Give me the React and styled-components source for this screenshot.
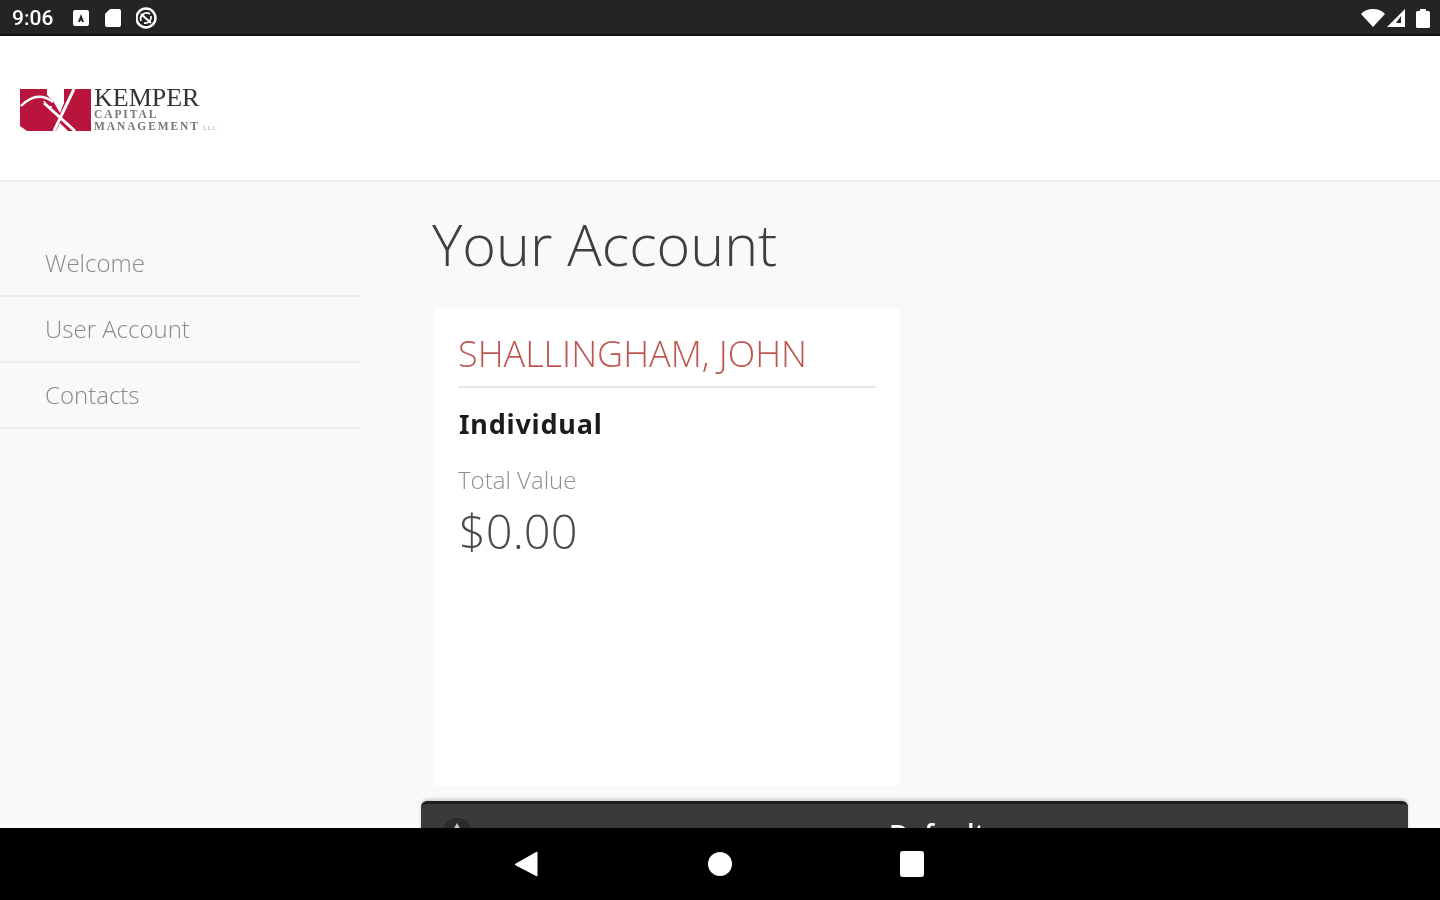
import React from 'react';
import styled, { createGlobalStyle } from 'styled-components';

const Global = createGlobalStyle`
  html, body { margin: 0; padding: 0; background: #000; }
  * { box-sizing: border-box; }
`;
const Page = styled.div`
  width: 1440px; height: 900px; display: flex; flex-direction: column; overflow: hidden;
  font-family: "Open Sans", "Noto Sans", sans-serif; background: #f9f9f9; filter: blur(0.6px);
`;
const StatusBar = styled.div`
  height: 36px; flex: none; background: #242424; border-bottom: 2px solid #111; color: #fff;
  display: flex; align-items: center; justify-content: space-between; padding: 1px 10px 0 12px;
`;
const StatusGroup = styled.div`
  display: flex; align-items: center; gap: ${p => p.$gap || 0}px;
`;
const BatteryGap = styled.span`
  width: 10px;
`;
const Clock = styled.span`
  font-family: Roboto, sans-serif; font-size: 21px; font-weight: 500; width: 42px; margin-right: 18px;
`;
const Header = styled.header`
  height: 146px; flex: none; background: #fff; border-bottom: 2px solid #eeeeee;
  display: flex; align-items: center; padding: 0 0 0 20px;
`;
const Logo = styled.div`
  display: flex; align-items: flex-start; margin-top: 4px;
`;
const LogoText = styled.div`
  font-family: "Liberation Serif", serif; margin: -1px 0 0 3px;
`;
const LogoMain = styled.div`
  font-size: 26px; line-height: 20px; color: #333; height: 20px;
`;
const LogoSmall = styled.div`
  font-size: 11.5px; line-height: 12px; height: 12px; color: #777; white-space: nowrap; letter-spacing: 1.9px;
  font-weight: 700;
`;
const Tiny = styled.span`
  font-size: 7px; margin-left: 3px; color: #aaa; letter-spacing: 0.5px; font-weight: 400;
`;
const Content = styled.div`
  flex: 1; min-height: 0; display: flex; overflow: hidden;
`;
const Sidebar = styled.nav`
  width: 360px; flex: none; padding-top: 49px;
`;
const NavItem = styled.div`
  height: 66px; padding: 0 0 1px 45px; display: flex; align-items: center;
  font-size: 24px; font-weight: 300; color: #8a8a8a; border-bottom: 2px solid #eeeeee;
`;
const Main = styled.main`
  flex: 1; min-width: 0; padding: 26px 32px 0 61px; display: flex; flex-direction: column;
`;
const Title = styled.h1`
  flex: none; margin: 0 0 0 11px; font-size: 57.5px; line-height: 73px; font-weight: 300; color: #3f3f3f; height: 100px;
`;
const Card = styled.section`
  width: 466px; height: 478px; flex: none; margin-left: 13px; background: #fff; border-radius: 5px;
  padding: 20px 24px;
`;
const Name = styled.h2`
  margin: 0; font-size: 36px; line-height: 52px; font-weight: 300; color: #bd5650;
  height: 60px; border-bottom: 2px solid #e8e8e8; white-space: nowrap;
`;
const AccountType = styled.div`
  margin: 18px 0 0 1px; font-family: "Noto Sans", sans-serif; font-size: 27px; line-height: 36px; font-weight: 700;
  letter-spacing: 0.8px; color: #1c1c1c;
`;
const Label = styled.div`
  margin-top: 22px; font-size: 24px; line-height: 32px; font-weight: 300; color: #8f8f8f;
`;
const Value = styled.div`
  margin: 4px 0 0 1px; font-size: 47px; line-height: 62px; font-weight: 300; color: #4a4a4a;
`;
const ActionBar = styled.div`
  width: 987px; height: 60px; flex: none; margin: 15px 0 0 0; background: #3a3a3a;
  border-top: 3px solid #1e1e1e; border-radius: 6px 6px 0 0; position: relative;
  box-shadow: 0 -2px 3px rgba(0,0,0,.18);
  padding-left: 468px; color: #fff; font-size: 27px; font-weight: 600; line-height: 60px;
`;
const ActionIcon = styled.span`
  position: absolute; left: 21px; top: 14px; width: 30px; height: 30px; border-radius: 50%; background: #2b2b2b;
`;
const ActionCaret = styled.span`
  position: absolute; left: 11px; top: 5px; border-left: 4px solid transparent; border-right: 4px solid transparent; border-bottom: 7px solid #ccc;
`;
const NavBar = styled.div`
  height: 72px; flex: none; background: #000; display: flex; align-items: center; justify-content: center; gap: 144px;
`;
const Svg = styled.svg`
  display: block; flex: none;
`;

const App = () => (
  <Page>
    <Global />
    <StatusBar>
      <StatusGroup>
        <Clock>9:06</Clock>
        <StatusGroup $gap={13}>
          <Svg width="18" height="18" viewBox="0 0 18 18"><rect x="1" y="1" width="16" height="16" rx="2" fill="#fff"/><path d="M9 5l3 8h-2l-.5-1.600h-1L8 13H6z" fill="#222"/></Svg>
          <Svg width="20" height="20" viewBox="0 0 20 20"><path d="M7 1h9a2 2 0 0 1 2 2v14a2 2 0 0 1-2 2H4a2 2 0 0 1-2-2V6z" fill="#fff"/></Svg>
          <Svg width="24" height="24" viewBox="0 0 24 24"><circle cx="10" cy="12" r="9.500" fill="none" stroke="#fff" strokeWidth="2.400"/><path d="M5 15a6 6 0 0 1 9-7M15 10a6 6 0 0 1-7 7" fill="none" stroke="#fff" strokeWidth="1.800"/><path d="M5 8l10 9" stroke="#fff" strokeWidth="2.200"/></Svg>
        </StatusGroup>
      </StatusGroup>
      <StatusGroup>
        <Svg width="26" height="20" viewBox="0 0 26 20"><path d="M1 6C4 2.500 8 1 13 1s9 1.500 12 5L13 19z" fill="#fff"/></Svg>
        <Svg width="20" height="20" viewBox="0 0 20 20"><path d="M19 1v18H1zM15 8l-5 7h5z" fill="#fff" fillRule="evenodd"/></Svg>
        <BatteryGap />
        <Svg width="14" height="20" viewBox="0 0 14 20"><path d="M4 1h6v2h2.500A1.500 1.500 0 0 1 14 4.500V18.500A1.500 1.500 0 0 1 12.500 20h-11A1.500 1.500 0 0 1 0 18.500V4.500A1.500 1.500 0 0 1 1.500 3H4z" fill="#fff"/></Svg>
      </StatusGroup>
    </StatusBar>
    <Header>
      <Logo>
        <Svg width="71" height="42" viewBox="0 0 71 42">
          <rect width="71" height="42" fill="#b9153c"/>
          <path d="M27 0H44V14L40 24 33 12 27 6z" fill="#fff"/>
          <path d="M44 0h7l-7 15z" fill="#b9153c"/>
          <path d="M1 17Q17 1 33 13" stroke="#fff" strokeWidth="2.400" fill="none"/>
          <path d="M24 14L55 42M54 0L34 42" stroke="#fff" strokeWidth="3" fill="none"/>
          <path d="M24 12q2 6 8 6" stroke="#fff" strokeWidth="1.500" fill="none"/>
          <path d="M0 37l7 5H0zM36 42l4-8 8 8z" fill="#fff"/>
        </Svg>
        <LogoText>
          <LogoMain>KEMPER</LogoMain>
          <LogoSmall>CAPITAL</LogoSmall>
          <LogoSmall>MANAGEMENT<Tiny>LLC</Tiny></LogoSmall>
        </LogoText>
      </Logo>
    </Header>
    <Content>
      <Sidebar>
        <NavItem>Welcome</NavItem>
        <NavItem>User Account</NavItem>
        <NavItem>Contacts</NavItem>
      </Sidebar>
      <Main>
        <Title>Your Account</Title>
        <Card>
          <Name>SHALLINGHAM, JOHN</Name>
          <AccountType>Individual</AccountType>
          <Label>Total Value</Label>
          <Value>$0.00</Value>
        </Card>
        <ActionBar>
          <ActionIcon><ActionCaret /></ActionIcon>
          Default
        </ActionBar>
      </Main>
    </Content>
    <NavBar>
      <Svg width="48" height="28" viewBox="0 0 48 28"><path d="M33 2v24L11 14.500z" fill="#fff" stroke="#fff" strokeLinejoin="round"/></Svg>
      <Svg width="48" height="28" viewBox="0 0 48 28"><circle cx="24" cy="14" r="12" fill="#fff"/></Svg>
      <Svg width="48" height="28" viewBox="0 0 48 28"><rect x="12" y="1" width="24" height="26" rx="3" fill="#fff"/></Svg>
    </NavBar>
  </Page>
);

export default App;
